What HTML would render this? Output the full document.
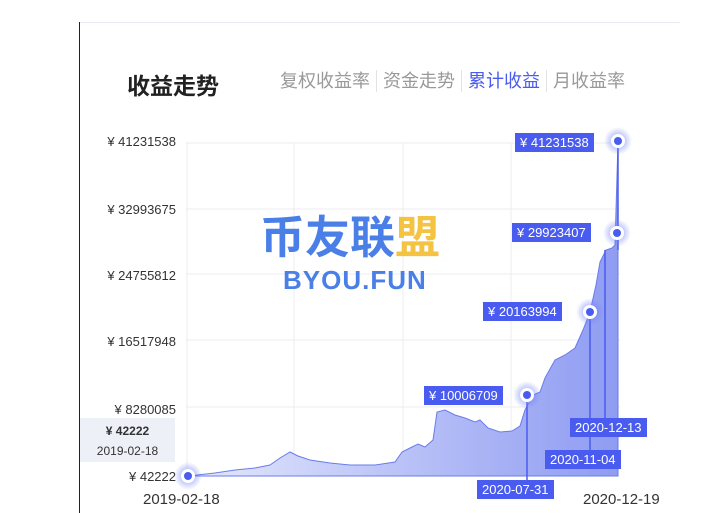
<!DOCTYPE html>
<html><head><meta charset="utf-8"><style>
*{margin:0;padding:0;box-sizing:border-box}
body{width:717px;height:513px;background:#fff;position:relative;overflow:hidden;font-family:"Liberation Sans","Noto Sans CJK SC",sans-serif}
.a{position:absolute;white-space:nowrap}
.yl{position:absolute;right:541px;font-size:13px;color:#333;text-align:right}
.tag{position:absolute;background:#4a5cf0;color:#fff;font-size:13px;height:19px;line-height:19px;padding:0 5px}
.tabs{position:absolute;left:280px;top:70px;font-size:18px;color:#999;display:flex}
.tabs span{padding:0 6px;border-right:1px solid #e3e3e3;line-height:22px}
.tabs span:first-child{padding-left:0}
.tabs span:last-child{border:none}
</style></head><body>
<div class="a" style="left:79px;top:22px;width:1px;height:491px;background:#222"></div>
<div class="a" style="left:80px;top:22px;width:600px;height:1px;background:#e8eaf4"></div>
<div class="a" style="left:127px;top:67px;font-size:23px;font-weight:bold;color:#222">收益走势</div>
<div class="tabs"><span>复权收益率</span><span>资金走势</span><span style="color:#4a5cf0">累计收益</span><span>月收益率</span></div>

<svg class="a" style="left:0;top:0" width="717" height="513">
<defs>
<linearGradient id="g" x1="0" x2="1" y1="0" y2="0"><stop offset="0" stop-color="#e4e8fc"/><stop offset="1" stop-color="#8f9cf2"/></linearGradient>
<radialGradient id="gl"><stop offset="0.5" stop-color="#6f7ff5" stop-opacity="0.4"/><stop offset="1" stop-color="#6f7ff5" stop-opacity="0"/></radialGradient>
</defs>
<g stroke="#ececf0" stroke-width="1">
<line x1="186" y1="143" x2="620" y2="143"/><line x1="186" y1="209" x2="620" y2="209"/><line x1="186" y1="274" x2="620" y2="274"/><line x1="186" y1="340" x2="620" y2="340"/><line x1="186" y1="407" x2="620" y2="407"/>
<line x1="187" y1="143" x2="187" y2="476"/><line x1="294" y1="143" x2="294" y2="476"/><line x1="403" y1="143" x2="403" y2="476"/><line x1="511" y1="143" x2="511" y2="476"/>
</g>
<path d="M188 476 L215 473 L235 470 L255 468 L270 465 L280 458 L290 452 L298 456 L310 460 L330 463 L350 465 L375 465 L395 462 L402 452 L410 448 L418 444 L425 447 L433 440 L437 412 L445 410 L455 415 L465 418 L475 422 L480 420 L488 428 L500 432 L512 431 L520 426 L525 410 L533 395 L540 392 L545 378 L555 360 L565 355 L575 348 L583 330 L590 312 L596 285 L600 262 L606 250 L612 248 L615 245 L618 141 L618 476 Z" fill="url(#g)" stroke="#6a7cea" stroke-width="1"/>
<g stroke="#4a5cf0" stroke-width="1.5">
<line x1="527" y1="395" x2="527" y2="482"/><line x1="590" y1="312" x2="590" y2="452"/><line x1="605" y1="250" x2="605" y2="420"/><line x1="618" y1="141" x2="618" y2="250"/>
</g>
<g>
<circle cx="188" cy="476" r="14" fill="url(#gl)"/><circle cx="188" cy="476" r="7" fill="#fff"/><circle cx="188" cy="476" r="4" fill="#4a5cf0"/>
<circle cx="618" cy="141" r="14" fill="url(#gl)"/><circle cx="618" cy="141" r="7" fill="#fff"/><circle cx="618" cy="141" r="4" fill="#4a5cf0"/>
<circle cx="617" cy="233" r="14" fill="url(#gl)"/><circle cx="617" cy="233" r="7" fill="#fff"/><circle cx="617" cy="233" r="4" fill="#4a5cf0"/>
<circle cx="590" cy="312" r="14" fill="url(#gl)"/><circle cx="590" cy="312" r="7" fill="#fff"/><circle cx="590" cy="312" r="4" fill="#4a5cf0"/>
<circle cx="527" cy="395" r="14" fill="url(#gl)"/><circle cx="527" cy="395" r="7" fill="#fff"/><circle cx="527" cy="395" r="4" fill="#4a5cf0"/>
</g>
</svg>

<div class="yl" style="top:134px">¥ 41231538</div>
<div class="yl" style="top:202px">¥ 32993675</div>
<div class="yl" style="top:268px">¥ 24755812</div>
<div class="yl" style="top:334px">¥ 16517948</div>
<div class="yl" style="top:402px">¥ 8280085</div>
<div class="yl" style="top:469px">¥ 42222</div>
<div class="a" style="left:80px;top:418px;width:95px;height:44px;background:#eef0f8;text-align:center;font-size:12px;color:#333;line-height:20px;padding-top:3px"><b>¥ 42222</b><br>2019-02-18</div>

<div class="tag" style="left:515px;top:133px">¥ 41231538</div>
<div class="tag" style="left:512px;top:223px">¥ 29923407</div>
<div class="tag" style="left:483px;top:302px">¥ 20163994</div>
<div class="tag" style="left:424px;top:386px">¥ 10006709</div>
<div class="tag" style="left:570px;top:418px">2020-12-13</div>
<div class="tag" style="left:545px;top:450px">2020-11-04</div>
<div class="tag" style="left:477px;top:480px">2020-07-31</div>

<div class="a" style="left:143px;top:491px;font-size:15px;color:#333">2019-02-18</div>
<div class="a" style="left:583px;top:491px;font-size:15px;color:#333">2020-12-19</div>

<div class="a" style="left:260px;top:213px;font-size:45px;line-height:50px;color:#4a7fe8;font-weight:bold;letter-spacing:0px"><span>币</span><span>友</span><span>联</span><span style="color:#f5c342">盟</span></div>
<div class="a" style="left:283px;top:265px;font-size:26px;color:#4a7fe8;font-weight:bold;letter-spacing:1px">BYOU.FUN</div>
</body></html>
